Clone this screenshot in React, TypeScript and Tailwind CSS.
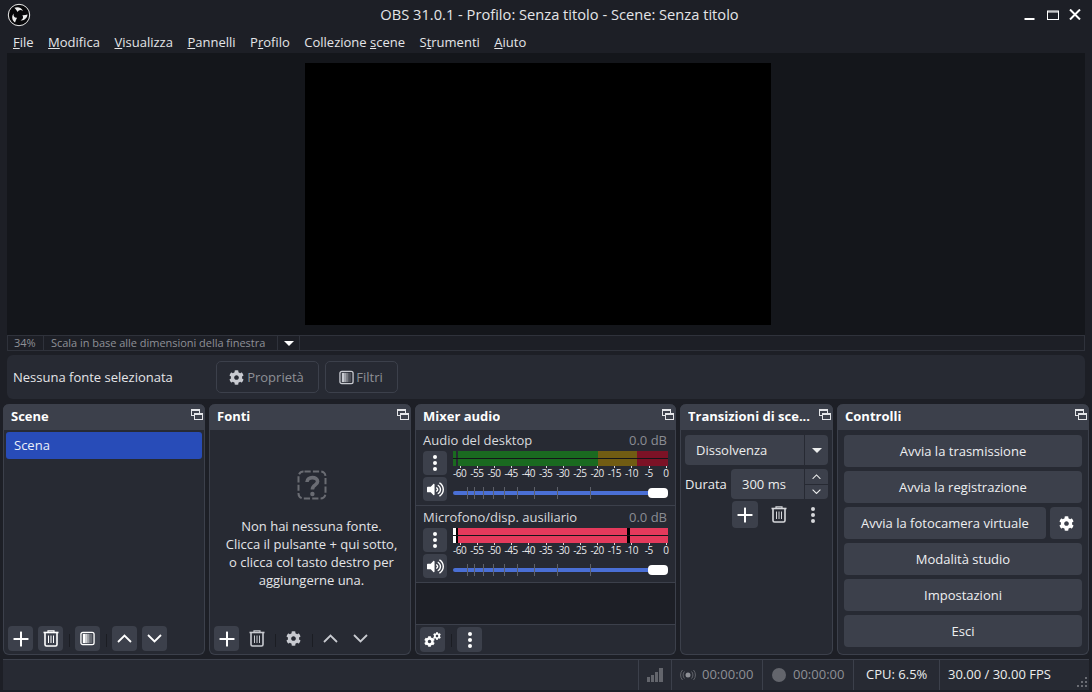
import type { ReactNode } from "react";
import { FaCog, FaVolumeUp } from "react-icons/fa";

const font = { fontFamily: '"Open Sans", "Noto Sans", sans-serif' };

function Dither() {
  return (
    <svg width="15" height="15" viewBox="0 0 16 16">
      <rect x="1" y="1.5" width="14" height="13" rx="2" fill="none" stroke="currentColor" strokeWidth="1.4" />
      <rect x="3" y="3" width="3" height="10" fill="currentColor" />
      <rect x="6" y="3" width="2" height="10" fill="currentColor" opacity="0.75" />
      <rect x="8" y="3" width="2" height="10" fill="currentColor" opacity="0.5" />
      <rect x="10" y="3" width="3" height="10" fill="currentColor" opacity="0.22" />
    </svg>
  );
}

function Plus() {
  return (
    <svg width="16" height="16" viewBox="0 0 16 16" fill="currentColor">
      <rect x="0.5" y="7" width="15" height="2" rx="0.5" />
      <rect x="7" y="0.5" width="2" height="15" rx="0.5" />
    </svg>
  );
}

function Trash() {
  return (
    <svg width="16" height="17" viewBox="0 0 16 17" fill="none" stroke="currentColor">
      <path d="M0.5 2.5H15.5" strokeWidth="1.6" />
      <path d="M5 2V0.8H11V2" strokeWidth="1.2" />
      <path d="M2 3V14.5Q2 16 3.5 16H12.5Q14 16 14 14.5V3" strokeWidth="1.6" />
      <path d="M5.5 5.5V13M8 5.5V13M10.5 5.5V13" strokeWidth="1" />
    </svg>
  );
}

function Chevron({ up, size = 15 }: { up?: boolean; size?: number }) {
  return (
    <svg width={size} height={size * 0.6} viewBox="0 0 15 9" fill="none" stroke="currentColor" strokeWidth="1.8">
      <path d={up ? "M1 8L7.5 1.5L14 8" : "M1 1L7.5 7.5L14 1"} />
    </svg>
  );
}

function Dots() {
  return (
    <svg width="4" height="16" viewBox="0 0 4 16" fill="currentColor">
      <circle cx="2" cy="2" r="2" />
      <circle cx="2" cy="8" r="2" />
      <circle cx="2" cy="14" r="2" />
    </svg>
  );
}

function Caret() {
  return (
    <svg width="10" height="5" viewBox="0 0 10 5" fill="currentColor">
      <path d="M0 0H10L5 5Z" />
    </svg>
  );
}

function UndockIcon() {
  return (
    <svg width="12" height="11" viewBox="0 0 12 11" fill="none" stroke="#e4e5e8" strokeWidth="1">
      <rect x="0.5" y="0.5" width="8" height="6" fill="#3c404b" />
      <path d="M0.5 1.5H8.5" />
      <rect x="3.5" y="4.5" width="8" height="6" fill="#3c404b" />
      <path d="M3.5 5.5H11.5" />
    </svg>
  );
}

function Logo() {
  const blade = "M7.4 4.8C10.4 3.4 14.9 4.4 16 8.2C14.2 6.3 11.6 6.6 10.6 9C9.8 7.4 8.6 6 7.4 4.8Z";
  return (
    <svg width="24" height="24" viewBox="0 0 24 24">
      <circle cx="12" cy="12" r="10.7" fill="#08080a" stroke="#ececec" strokeWidth="1" />
      <g fill="#ececec">
        <path d={blade} />
        <path d={blade} transform="rotate(120 12 12)" />
        <path d={blade} transform="rotate(240 12 12)" />
      </g>
    </svg>
  );
}

function QuestionIcon() {
  return (
    <svg width="30" height="30" viewBox="0 0 30 30" fill="none" stroke="#6a6c73">
      <rect x="1.5" y="1.5" width="27" height="27" rx="5" strokeWidth="2" strokeDasharray="6.2 2.2" strokeDashoffset="-1" />
      <path d="M10 12C10 6.2 20.6 6.2 20.6 11.6C20.6 15 15.4 14.8 15.4 19.4" strokeWidth="3.6" />
      <circle cx="15.4" cy="24" r="2.2" fill="#6a6c73" stroke="none" />
    </svg>
  );
}

function MixerCogs() {
  return (
    <span className="relative block h-[15px] w-[17px]">
      <span className="absolute bottom-0 left-0">
        <FaCog size={11} />
      </span>
      <span className="absolute right-0 top-0">
        <FaCog size={8} />
      </span>
    </span>
  );
}

function Dock({ title, className, children }: { title: string; className: string; children: ReactNode }) {
  return (
    <section className={`flex flex-col h-[251px] rounded-md border border-t-0 border-[#3c404b] bg-[#272a33] ${className}`}>
      <header className="flex items-center justify-between h-[26px] shrink-0 -mx-px rounded-t-md bg-[#3c404b] pl-2 pr-[2px]">
        <span className="text-[13px] font-bold text-[#fefefe] whitespace-nowrap overflow-hidden">{title}</span>
        <span className="self-start mt-[5px] shrink-0">
          <UndockIcon />
        </span>
      </header>
      {children}
    </section>
  );
}

function ToolButton({ children, plain }: { children: ReactNode; plain?: boolean }) {
  return (
    <button
      className={`flex h-[25px] w-[25px] shrink-0 items-center justify-center rounded-[4px] ${
        plain ? "text-[#c8cad0]" : "bg-[#3c404b] text-white"
      }`}
    >
      {children}
    </button>
  );
}

function StripButton({ children }: { children: ReactNode }) {
  return (
    <button className="flex h-[24px] w-[24px] items-center justify-center rounded-[4px] bg-[#3c404b] text-white">
      {children}
    </button>
  );
}

function Sep() {
  return <span className="ml-[6px] mr-[5px] h-[13px] w-px shrink-0 self-center bg-[#1b1d23]" />;
}

const scale = ["-60", "-55", "-50", "-45", "-40", "-35", "-30", "-25", "-20", "-15", "-10", "-5", "0"];
const faderTicks = [14, 21, 30, 40, 51, 64, 81, 104, 137];

function Meter({ active }: { active?: boolean }) {
  const row = (
    <div className="flex h-[7px]">
      {active ? (
        <>
          <div className="w-[3px] bg-white" />
          <div className="w-[2px] bg-black" />
          <div className="w-[169px] bg-[#e43a5c]" />
          <div className="w-[3px] bg-black" />
          <div className="flex-1 bg-[#e43a5c]" />
        </>
      ) : (
        <>
          <div className="w-[3px] bg-[#1a6a20]" />
          <div className="w-[2px] bg-[#272a33]" />
          <div className="w-[140px] bg-[#1a6a20]" />
          <div className="w-[39px] bg-[#715c13]" />
          <div className="flex-1 bg-[#7c1226]" />
        </>
      )}
    </div>
  );
  return (
    <div className="flex flex-col gap-px bg-[#14151a]">
      {row}
      {row}
    </div>
  );
}

function Strip({ name, active }: { name: string; active?: boolean }) {
  return (
    <div className={`shrink-0 border-b border-[#3c404b] px-[7px] ${active ? "h-[77px] pt-[3px]" : "h-[76px] pt-[2px]"}`}>
      <div className="flex h-[18px] items-center justify-between pr-px text-[13px] text-[#d9dade]">
        <span>{name}</span>
        <span className="text-[#8b8d93]">0.0 dB</span>
      </div>
      <div className="mt-[1px] flex gap-[6px]">
        <div className="flex flex-col gap-[2px]">
          <StripButton>
            <Dots />
          </StripButton>
          <StripButton>
            <FaVolumeUp size={17} />
          </StripButton>
        </div>
        <div className="w-[215px]">
          <Meter active={active} />
          <div className="-ml-[2px] flex h-[13px] w-[225px] text-[10px] leading-[13px] tracking-[-0.5px] text-[#e8e8ea]">
            {scale.map((s) => (
              <span key={s} className="relative flex w-[17.2px] justify-center pt-[1px]">
                <span className="absolute left-1/2 top-0 h-[2px] w-px bg-[#d8d8dc]" />
                {s}
              </span>
            ))}
          </div>
          <div className="relative mt-[9px] h-[10px]">
            <div className="absolute left-0 right-[10px] top-[3px] h-[4px] rounded-sm bg-[#4a6fd5]" />
            {faderTicks.map((t) => (
              <span key={t} className="absolute top-[-1px] h-[12px] w-px bg-[#5d6069]" style={{ left: t }} />
            ))}
            <div className="absolute right-0 top-0 h-[10px] w-[20px] rounded-[4px] bg-white" />
          </div>
        </div>
      </div>
    </div>
  );
}

function ControlButton({ children, className = "" }: { children: ReactNode; className?: string }) {
  return (
    <button className={`flex h-[32px] items-center justify-center rounded-[4px] bg-[#3c404b] pt-[1px] text-[13px] text-[#eeeff1] ${className}`}>
      {children}
    </button>
  );
}

export default function App() {
  return (
    <div style={font} className="flex h-[692px] w-[1092px] flex-col overflow-hidden bg-[#1d1f26] text-[#eceded]">
      <div className="relative flex h-[28px] shrink-0 items-center justify-center pl-[27px] text-[14.67px] text-[#e4e5e8]">
        <span className="absolute left-[7px] top-[3px]">
          <Logo />
        </span>
        <span>OBS 31.0.1 - Profilo: Senza titolo - Scene: Senza titolo</span>
        <div className="absolute right-[11px] top-[9px] flex items-center text-white">
          <svg width="11" height="11" viewBox="0 0 11 11" fill="currentColor">
            <rect x="0.5" y="9" width="10" height="2" />
          </svg>
          <svg className="ml-[12px]" width="12" height="11" viewBox="0 0 12 11" fill="none" stroke="currentColor">
            <rect x="0.5" y="2" width="11" height="8.5" />
            <path d="M0.5 3H11.5" />
          </svg>
          <svg className="ml-[10px]" width="12" height="11" viewBox="0 0 12 11" stroke="currentColor" strokeWidth="2">
            <path d="M1 0.5L11 10.5M11 0.5L1 10.5" />
          </svg>
        </div>
      </div>

      <nav className="flex h-[25px] shrink-0 items-center gap-[14.5px] pl-[13px] pt-[4px] text-[13px] text-[#e4e5e8]">
        <span><u>F</u>ile</span>
        <span><u>M</u>odifica</span>
        <span><u>V</u>isualizza</span>
        <span><u>P</u>annelli</span>
        <span>P<u>r</u>ofilo</span>
        <span>Collezione <u>s</u>cene</span>
        <span>S<u>t</u>rumenti</span>
        <span><u>A</u>iuto</span>
      </nav>

      <div className="mx-[7px] flex shrink-0 flex-col">
        <div className="flex h-[282px] items-center justify-center bg-[#14161b] pr-[16px]">
          <div className="h-[262px] w-[466px] bg-black" />
        </div>
        <div className="flex h-[16px] items-center border border-[#2f323b] text-[11px] tracking-[-0.03px] text-[#8e9096]">
          <span className="w-[36px] border-r border-[#2f323b] pl-[6px] leading-[14px]">34%</span>
          <span className="w-[234px] whitespace-nowrap border-r border-[#2f323b] pl-[7px] leading-[14px]">Scala in base alle dimensioni della finestra</span>
          <span className="flex h-[14px] w-[22px] items-center justify-center border-r border-[#2f323b] text-white">
            <Caret />
          </span>
        </div>
      </div>

      <div className="mx-[7px] mt-[4px] flex h-[44px] shrink-0 items-center rounded-md bg-[#272a33] pl-[6px] pt-[1px] text-[13px]">
        <span className="w-[203px] text-[#e4e5e8]">Nessuna fonte selezionata</span>
        <button className="-mt-[1px] flex h-[32px] w-[103px] items-center justify-center gap-[3px] rounded-[5px] border border-[#3c404b] pr-[2px] pt-[1px] text-[#8e9096]">
          <span className="text-[#c8cad0]"><FaCog size={15} /></span>Proprietà
        </button>
        <button className="-mt-[1px] ml-[6px] flex h-[32px] w-[73px] items-center justify-center gap-[2px] rounded-[5px] border border-[#3c404b] pr-[1px] pt-[1px] text-[#8e9096]">
          <span className="text-[#c8cad0]"><Dither /></span>Filtri
        </button>
      </div>

      <div className="mx-[3px] mt-[5px] flex shrink-0 gap-[4px]">
        <Dock title="Scene" className="w-[202px]">
          <div className="flex-1 p-[2px]">
            <div className="flex h-[27px] items-center rounded-[3px] bg-[#284cb8] pl-[8px] text-[13px] text-[#eceff8]">Scena</div>
          </div>
          <div className="flex h-[28px] items-start pl-[4px]">
            <ToolButton><Plus /></ToolButton>
            <span className="w-[5px]" />
            <ToolButton><Trash /></ToolButton>
            <Sep />
            <ToolButton><Dither /></ToolButton>
            <Sep />
            <ToolButton><Chevron up /></ToolButton>
            <span className="w-[5px]" />
            <ToolButton><Chevron /></ToolButton>
          </div>
        </Dock>

        <Dock title="Fonti" className="w-[202px]">
          <div className="flex flex-1 flex-col items-center pl-[7px] pr-[4px] pt-[40px] text-center text-[13px] leading-[18px] text-[#e4e5e8]">
            <QuestionIcon />
            <p className="mt-[17px]">
              Non hai nessuna fonte.
              <br />
              Clicca il pulsante + qui sotto,
              <br />
              o clicca col tasto destro per
              <br />
              aggiungerne una.
            </p>
          </div>
          <div className="flex h-[28px] items-start pl-[4px]">
            <ToolButton><Plus /></ToolButton>
            <span className="w-[5px]" />
            <ToolButton plain><Trash /></ToolButton>
            <Sep />
            <ToolButton plain><FaCog size={15} /></ToolButton>
            <Sep />
            <ToolButton plain><Chevron up /></ToolButton>
            <span className="w-[5px]" />
            <ToolButton plain><Chevron /></ToolButton>
          </div>
        </Dock>

        <Dock title="Mixer audio" className="w-[261px]">
          <Strip name="Audio del desktop" />
          <Strip name="Microfono/disp. ausiliario" active />
          <div className="flex-1 bg-[#1d1f26]" />
          <div className="flex h-[30px] shrink-0 items-start border-t border-[#3c404b] pl-[4px] pt-[2px]">
            <ToolButton><MixerCogs /></ToolButton>
            <Sep />
            <ToolButton><Dots /></ToolButton>
          </div>
        </Dock>

        <Dock title="Transizioni di sce..." className="w-[153px]">
          <div className="flex flex-col px-[4px] pt-[5px] text-[13px]">
            <div className="flex h-[30px] items-center rounded-[4px] bg-[#3c404b]">
              <span className="flex-1 pl-[11px] pt-[1px]">Dissolvenza</span>
              <span className="flex h-full w-[24px] items-center justify-center border-l border-[#272a33]">
                <Caret />
              </span>
            </div>
            <div className="mt-[4px] flex items-center justify-between">
              <span className="pt-[1px]">Durata</span>
              <div className="flex h-[30px] w-[97px] items-center rounded-[4px] bg-[#3c404b]">
                <span className="flex-1 pl-[11px] pt-[1px]">300 ms</span>
                <span className="flex h-full w-[24px] flex-col border-l border-[#272a33]">
                  <span className="flex flex-1 items-center justify-center border-b border-[#272a33]"><Chevron up size={9} /></span>
                  <span className="flex flex-1 items-center justify-center"><Chevron size={9} /></span>
                </span>
              </div>
            </div>
            <div className="mt-[2px] flex items-center pl-[47px] text-[#d6d7db]">
              <span className="flex h-[27px] w-[26px] items-center justify-center rounded-[4px] bg-[#3c404b] text-white"><Plus /></span>
              <span className="ml-[13px] flex w-[16px] justify-center"><Trash /></span>
              <span className="ml-[24px] flex w-[4px] justify-center"><Dots /></span>
            </div>
          </div>
        </Dock>

        <Dock title="Controlli" className="w-[252px]">
          <div className="flex flex-col gap-[4px] px-[6px] pt-[5px]">
            <ControlButton>Avvia la trasmissione</ControlButton>
            <ControlButton>Avvia la registrazione</ControlButton>
            <div className="flex gap-[4px]">
              <ControlButton className="flex-1">Avvia la fotocamera virtuale</ControlButton>
              <ControlButton className="w-[32px] text-white"><FaCog size={15} /></ControlButton>
            </div>
            <ControlButton>Modalità studio</ControlButton>
            <ControlButton>Impostazioni</ControlButton>
            <ControlButton>Esci</ControlButton>
          </div>
        </Dock>
      </div>

      <footer className="relative mx-[3px] mt-[4px] flex h-[31px] shrink-0 items-center justify-end border-t border-[#3c404b] bg-[#272a33] text-[13px] text-[#8e9096]">
        <div className="flex h-full w-[33px] items-center justify-center border-l border-[#3c404b]">
          <svg width="16" height="14" viewBox="0 0 16 14" fill="#63656c">
            <rect x="0" y="9" width="3" height="5" />
            <rect x="4" y="7" width="3" height="7" />
            <rect x="8" y="4" width="3" height="10" />
            <rect x="12" y="0" width="4" height="14" />
          </svg>
        </div>
        <div className="flex h-full w-[91px] items-center gap-[6px] border-l border-[#3c404b] pl-[8px]">
          <svg width="16" height="12" viewBox="0 0 16 12" fill="none" stroke="#63656c">
            <circle cx="8" cy="6" r="2.5" fill="#8e9096" stroke="none" />
            <path d="M4.5 2.5A5 5 0 0 0 4.5 9.5M11.5 2.5A5 5 0 0 1 11.5 9.5M2.5 1A7.5 7.5 0 0 0 2.5 11M13.5 1A7.5 7.5 0 0 1 13.5 11" />
          </svg>
          00:00:00
        </div>
        <div className="flex h-full w-[91px] items-center gap-[7px] border-l border-[#3c404b] pl-[9px]">
          <span className="h-[14px] w-[14px] rounded-full bg-[#63656c]" />
          00:00:00
        </div>
        <div className="flex h-full w-[86px] items-center border-l border-[#3c404b] pl-[12px] text-[#eceded]">CPU: 6.5%</div>
        <div className="flex h-full w-[150px] items-center border-l border-[#3c404b] pl-[8px] text-[#eceded]">30.00 / 30.00 FPS</div>
        <svg className="absolute bottom-[2px] right-[1px]" width="11" height="11" viewBox="0 0 11 11" fill="#6a6c73">
          <rect x="8" y="0" width="2" height="2" />
          <rect x="4" y="4" width="2" height="2" />
          <rect x="8" y="4" width="2" height="2" />
          <rect x="0" y="8" width="2" height="2" />
          <rect x="4" y="8" width="2" height="2" />
          <rect x="8" y="8" width="2" height="2" />
        </svg>
      </footer>
    </div>
  );
}
